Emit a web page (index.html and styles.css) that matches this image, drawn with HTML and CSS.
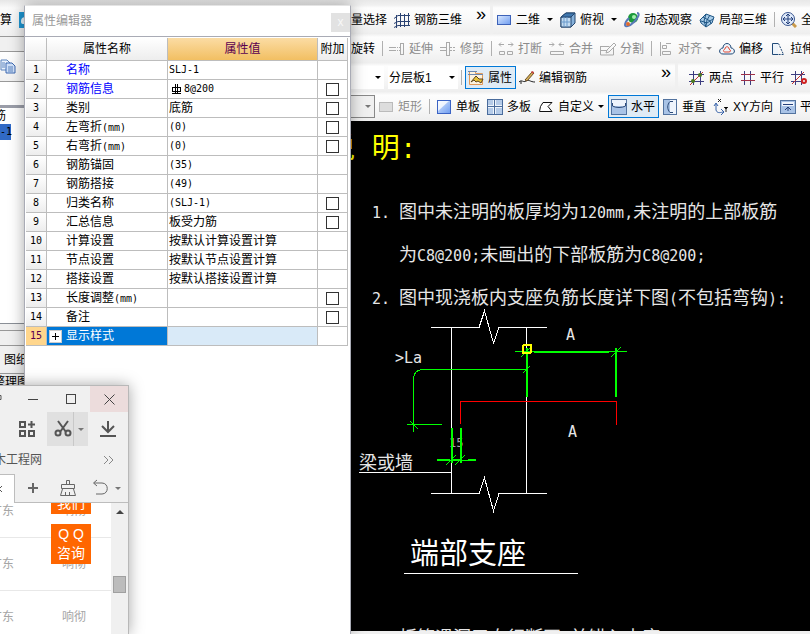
FILE: index.html
```
<!DOCTYPE html>
<html lang="zh-CN">
<head>
  <title>属性编辑器</title>
  <meta charset="UTF-8">
  <meta name="viewport" content="width=device-width, initial-scale=1">
  <link rel="stylesheet" href="styles.css">
</head>
<body>
  <div class="app">
    <!-- left dock, mostly under the floating windows -->
    <aside class="dock">
      <div class="dock-menu">
        <span>算</span>
        <svg width="16" height="16" viewBox="0 0 16 16"><rect width="16" height="16" fill="#1e96d2"/><path d="M2 9c0-3 3-5 5-3 4-1 6 4 3 6H4c-2 0-2-2-2-3z" fill="#e8f6fc"/></svg>
      </div>
      <div class="dock-strip"></div>
      <div class="dock-tools">
        <svg width="16" height="16" viewBox="0 0 16 16"><path d="M1 1h6l3 3v7H1z" fill="#eaf2fd" stroke="#5b83bd"/><path d="M6 4h6l3 3v7H6z" fill="#cfe0f8" stroke="#3c68b0"/><path d="M8 8h5M8 10h5M8 12h5M2 4h3M2 6h3M2 8h3" stroke="#5b83bd"/></svg>
      </div>
      <div class="dock-search"></div>
      <div class="dock-tree">
        <div class="tree-item tail">筋</div>
        <div class="tree-item selected">-1</div>
      </div>
      <div class="dock-strip split"></div>
      <div class="dock-strip"></div>
      <div class="dock-tab">图纸</div>
      <div class="dock-foot tail">整理图</div>
    </aside>

    <main class="workspace">
      <div class="toolbars">
        <div class="row">
          <div class="group view-tools">
            <button>批量选择</button>
            <button><svg width="16" height="16" viewBox="0 0 16 16"><path d="M2.500 3v13M6.500 1v14M10.500 2v13M14.500 1v13M0 6.500l4-3h12M0 11.500l4-2h12M0 15.500l4-2h12" fill="none" stroke="#2a4272"/></svg>钢筋三维</button>
            <button class="more">»</button>
          </div>
          <div class="group fill">
            <button class="split"><svg width="16" height="16" viewBox="0 0 16 16"><defs><linearGradient id="blue" x1="0" y1="0" x2="1" y2="1"><stop offset="0" stop-color="#dbe9ff"/><stop offset="1" stop-color="#6e9cf0"/></linearGradient></defs><rect x="1.500" y="3.500" width="13" height="9" fill="url(#blue)" stroke="#3d62b8"/></svg>二维<i class="caret"></i></button>
            <button class="split"><svg width="16" height="16" viewBox="0 0 16 16"><path d="M1 5l5-4h9v10l-4 4H1z" fill="#86b1da" stroke="#24466e"/><path d="M1 5h10v10H1z" fill="#c3dcf2" stroke="#24466e"/><path d="M1 5l5-4h9l-4 4z" fill="#3f76ad" stroke="#24466e"/><path d="M4 15V5M7 15V5M1 10h10" stroke="#6a9acb"/></svg>俯视<i class="caret"></i></button>
            <button><svg width="16" height="16" viewBox="0 0 16 16"><circle cx="9" cy="6" r="5" fill="#1d9a3c"/><circle cx="10" cy="5" r="2" fill="#a4efae"/><path d="M13 1c3 0 2 4-3 9S1 15 1 13s2-5 4-7" fill="none" stroke="#5a78b8" stroke-width="2"/><circle cx="4" cy="12" r="2" fill="#e06a2c"/></svg>动态观察</button>
            <button><svg width="16" height="16" viewBox="0 0 16 16"><path d="M1 8l6-6 8 3-2 6-6 4-5-4z" fill="#a8cce8" stroke="#1f5685"/><path d="M4 5l7 4 1 3M7 2l-2 7 2 6M11 3L8 8l-1 6M2 9l6 2 6-4" fill="none" stroke="#1f5685"/></svg>局部三维</button>
            <span class="sep"></span>
            <button><svg width="16" height="16" viewBox="0 0 16 16"><path d="M11 11l4 4" stroke="#c99a4a" stroke-width="3"/><circle cx="7" cy="7" r="6.500" fill="#dfeafa" stroke="#3a5690"/><path d="M7 2v10M2 7h10M5 4l2-2 2 2M5 10l2 2 2-2M4 5L2 7l2 2M10 5l2 2-2 2" fill="none" stroke="#24407c"/></svg>全屏</button>
          </div>
        </div>

        <div class="row">
          <div class="group fill edit-tools">
            <button>旋转</button>
            <span class="sep"></span>
            <button disabled><svg width="16" height="16" viewBox="0 0 16 16"><path d="M0 6.500h7M0 9.500h7M11.500 2v12M14.500 2v12M11 2.500h4M11 13.500h4M8 6.500h1M10 6.500h1M8 9.500h1M10 9.500h1" stroke="#aaa"/></svg>延伸</button>
            <button disabled><svg width="16" height="16" viewBox="0 0 16 16"><path d="M0 6.500h6M0 9.500h6M6.500 1v14M9.500 1v14M6 1.500h4M6 14.500h4M10 6.500h2M13 6.500h2M10 9.500h2M13 9.500h2" stroke="#aaa"/></svg>修剪</button>
            <span class="sep"></span>
            <button disabled><svg width="16" height="16" viewBox="0 0 16 16"><path d="M1 3.500h5M3 1.500l-2 2 2 2M10 3.500h5M13 1.500l2 2-2 2M1.500 10.500h5v3h-5zM9.500 10.500h5v3h-5z" fill="none" stroke="#aaa"/></svg>打断</button>
            <button disabled><svg width="16" height="16" viewBox="0 0 16 16"><path d="M0 3.500h5M3 1.500l2 2-2 2M10 3.500h5M12 1.500l-2 2 2 2M1.500 10.500h13v3h-13z" fill="none" stroke="#aaa"/></svg>合并</button>
            <button disabled><svg width="16" height="16" viewBox="0 0 16 16"><path d="M0.500 5.500h9M0.500 5v9h13V7M1 9.500h6M6 12l1-3 7-7 2 2-7 7z" fill="none" stroke="#aaa"/></svg>分割</button>
            <span class="sep"></span>
            <button disabled><svg width="16" height="16" viewBox="0 0 16 16"><path d="M2.500 1v14M4.500 4.500h4v3h-4zM4.500 10.500h8v3h-8zM8 2.500h5" fill="none" stroke="#aaa"/></svg>对齐<i class="caret"></i></button>
            <button><svg width="16" height="16" viewBox="0 0 16 16"><path d="M4 13c-5 0-4-6 0-6 0-6 8-6 8 0 4 0 5 6 0 6z" fill="#eef4fa" stroke="#214a78"/><path d="M6 11c-2 0-2-2 0-3 0-3 4-3 4 0 2 1 2 3 0 3z" fill="none" stroke="#e04530"/></svg>偏移</button>
            <button><svg width="16" height="16" viewBox="0 0 16 16"><path d="M8 2.500H2.500v11H8" fill="#eef4fa" stroke="#214a78"/><path d="M8.500 2.500l5 11H8" fill="none" stroke="#214a78" stroke-dasharray="2 1"/></svg>拉伸</button>
          </div>
        </div>

        <div class="row">
          <div class="group layer-tools">
            <label class="combo"><select aria-label="构件"><option></option></select></label>
            <label class="combo layer"><select aria-label="分层"><option>分层板1</option></select></label>
            <span class="sep"></span>
            <button class="pressed"><svg width="16" height="16" viewBox="0 0 16 16"><path d="M1.500 1.500h6v2h7v11h-13z" fill="#fdf3df" stroke="#e09a5a"/><path d="M0 1.500h9M0 4.500h15" stroke="#6c88b0"/><path d="M3 12l5-6 3 3 4 0-2 4-3-2-2 1-2-2z" fill="#e8c33a" stroke="#5a4520"/></svg>属性</button>
            <button><svg width="16" height="16" viewBox="0 0 16 16"><path d="M0 12c3-3 4 1 7-1s4 1 9 1M2 11v3" fill="none" stroke="#222"/><path d="M6 10l7-8 2 1-7 8z" fill="#d8b45a" stroke="#6a4b22"/><path d="M12 2l1-1 2 1-1 2z" fill="#c44"/></svg>编辑钢筋</button>
            <button class="more">»</button>
          </div>
          <div class="group fill">
            <span class="grip"></span>
            <button><svg width="16" height="16" viewBox="0 0 16 16"><path d="M4.500 1v14M11.500 1v14M0 4.500h15M0 11.500h15" stroke="#3d3d80"/><path d="M1 15L14 2" stroke="#c03030"/><circle cx="4" cy="11" r="2" fill="#4a7a20"/><circle cx="11" cy="5" r="2" fill="#4a7a20"/></svg>两点</button>
            <button><svg width="16" height="16" viewBox="0 0 16 16"><path d="M4.500 1v14M10.500 1v14" stroke="#3d3d80"/><path d="M1 4.500h14M1 10.500h14" stroke="#a03048"/></svg>平行</button>
            <button><svg width="16" height="16" viewBox="0 0 16 16"><path d="M4.500 1v14M10.500 1v14M0 4.500h14M0 11.500h10" stroke="#3d3d80"/><path d="M1 14L13 2" stroke="#c03030"/><circle cx="13" cy="11" r="2" fill="none" stroke="#d02020" stroke-width="2"/></svg>点角</button>
          </div>
        </div>

        <div class="row">
          <div class="group fill">
            <label class="combo boxed"><select aria-label="类型" disabled><option></option></select></label>
            <button disabled><svg width="16" height="16" viewBox="0 0 16 16"><rect x="1.500" y="3.500" width="13" height="9" fill="#ddd" stroke="#bbb"/></svg>矩形</button>
            <span class="sep"></span>
            <button><svg width="16" height="16" viewBox="0 0 16 16"><rect x="1.500" y="1.500" width="13" height="13" fill="url(#blue)" stroke="#3b63c4"/><path d="M2 2h11L2 12z" fill="#fff" opacity="0.8"/></svg>单板</button>
            <button><svg width="16" height="16" viewBox="0 0 16 16"><rect x="0.500" y="0.500" width="15" height="15" fill="#b5cbe8" stroke="#4a6c9c"/><path d="M7.500 1v14M1 7.500h14" stroke="#eef4fb" stroke-width="3"/><path d="M7.500 1v14M1 7.500h14" stroke="#4a6c9c"/></svg>多板</button>
            <button><svg width="16" height="16" viewBox="0 0 16 16"><path d="M5 3.500h9l-4 4 4 5H1.500l1-5z" fill="#fff" stroke="#111"/></svg>自定义<i class="caret"></i></button>
            <button class="pressed"><svg width="16" height="16" viewBox="0 0 16 16"><rect x="0.500" y="0.500" width="15" height="15" fill="#a9c3e6" stroke="#53739f"/><path d="M1 1h14v6H1z" fill="#eef4fc"/><path d="M1.500 4v3c3 2 10 2 13 0V4" fill="none" stroke="#2c4a78"/></svg>水平</button>
            <button><svg width="16" height="16" viewBox="0 0 16 16"><rect x="1.500" y="0.500" width="13" height="15" fill="#a9c3e6" stroke="#53739f"/><path d="M8 1h6v14H8z" fill="#eef4fc"/><path d="M11 2.500H8c-3 3-3 8 0 11h3" fill="none" stroke="#2c4a78"/></svg>垂直</button>
            <button><svg width="16" height="16" viewBox="0 0 16 16"><path d="M3 5v6c1 3 3 3 7 2M1 7l2-3 2 3M8 10l3 3-3 3" fill="none" stroke="#3460a8"/><path d="M5 0l3 3M8 0L5 3M11 8l2 2 2-2M13 10v3" stroke="#222"/></svg>XY方向</button>
            <button><svg width="16" height="16" viewBox="0 0 16 16"><rect x="0.500" y="1.500" width="15" height="13" fill="#a9c3e6" stroke="#53739f"/><path d="M2 3h12v4H2z" fill="#eef4fc"/><path d="M3 5.500h10M8 12V8M5 11l3-3 3 3" fill="none" stroke="#24407c"/></svg>平行边</button>
          </div>
        </div>
      </div>

      <section class="canvas">
        <h1>说 明:</h1>
        <div class="note"><span class="half">1.</span><p>图中未注明的板厚均为<span class="half">120mm,</span>未注明的上部板筋<br>为<span class="half">C8@200;</span>未画出的下部板筋为<span class="half">C8@200;</span></p></div>
        <div class="note"><span class="half">2.</span><p>图中现浇板内支座负筋长度详下图<span class="half">(</span>不包括弯钩<span class="half">):</span></p></div>
        <figure>
          <svg class="detail" width="330" height="220" viewBox="320 300 330 220">
            <!-- wall outline with break lines -->
            <g class="wall">
              <path d="M431 327.500H479L484.500 311L493.500 343L499 327.500H547"/>
              <path d="M431 493.500H479L484.500 478L493.500 511L499 493.500H547"/>
              <path d="M451.500 327V493M526.500 327V493M359 472.500H451"/>
            </g>
            <g class="rebar">
              <path d="M460.500 424V401.500H616.500V425"/>
            </g>
            <text class="faint" x="449" y="447">15</text>
            <g class="dims">
              <path d="M527 369.500H422Q413.500 370 413.500 380V432M407 424.500H442M410 421L418 429M523 373L530 366M515 351.500H627M521 357L531 347M611 357L621 347M446 465L456 455M455 465L465 455"/>
              <path class="thick" d="M527 348V397M616 348V397M534 352H609M452 428V463M461 428V463M437 460H450M452 460H461M468 460H476"/>
              <path d="M450 460.500H476"/>
            </g>
            <rect class="pick" x="523" y="345" width="8" height="8" rx="1"/>
            <text x="395" y="363">&gt;La</text>
            <text x="566" y="340">A</text>
            <text x="568" y="437">A</text>
            <text class="cjk" x="359" y="469">梁或墙</text>
          </svg>
          <figcaption>端部支座</figcaption>
        </figure>
        <div class="note"><span class="half">3.</span><p>板筋遇洞口自行断开<span class="half">,</span>并锚入支座</p></div>
      </section>
    </main>
  </div>

  <section class="window props">
    <header class="props-title">属性编辑器<button class="props-close" aria-label="关闭">x</button></header>
    <table>
      <colgroup><col class="c-num"><col class="c-name"><col class="c-value"><col class="c-add"></colgroup>
      <thead>
        <tr><th></th><th>属性名称</th><th class="active">属性值</th><th>附加</th></tr>
      </thead>
      <tbody>
        <tr><th>1</th><td class="name key">名称</td><td class="code">SLJ-1</td><td></td></tr>
        <tr><th>2</th><td class="name key">钢筋信息</td><td class="code"><svg class="grade" width="11" height="11" viewBox="0 0 11 11"><rect x="1.500" y="3.500" width="8" height="4" fill="none" stroke="#000"/><path d="M4.500 0v10M6.500 0v10M1 9.500h9" stroke="#000"/></svg>8@200</td><td class="add"><input type="checkbox" aria-label="附加 钢筋信息"></td></tr>
        <tr><th>3</th><td class="name">类别</td><td>底筋</td><td class="add"><input type="checkbox" aria-label="附加 类别"></td></tr>
        <tr><th>4</th><td class="name">左弯折<span class="code">(mm)</span></td><td class="code">(0)</td><td class="add"><input type="checkbox" aria-label="附加 左弯折"></td></tr>
        <tr><th>5</th><td class="name">右弯折<span class="code">(mm)</span></td><td class="code">(0)</td><td class="add"><input type="checkbox" aria-label="附加 右弯折"></td></tr>
        <tr><th>6</th><td class="name">钢筋锚固</td><td class="code">(35)</td><td></td></tr>
        <tr><th>7</th><td class="name">钢筋搭接</td><td class="code">(49)</td><td></td></tr>
        <tr><th>8</th><td class="name">归类名称</td><td class="code">(SLJ-1)</td><td class="add"><input type="checkbox" aria-label="附加 归类名称"></td></tr>
        <tr><th>9</th><td class="name">汇总信息</td><td>板受力筋</td><td class="add"><input type="checkbox" aria-label="附加 汇总信息"></td></tr>
        <tr><th>10</th><td class="name">计算设置</td><td>按默认计算设置计算</td><td></td></tr>
        <tr><th>11</th><td class="name">节点设置</td><td>按默认节点设置计算</td><td></td></tr>
        <tr><th>12</th><td class="name">搭接设置</td><td>按默认搭接设置计算</td><td></td></tr>
        <tr><th>13</th><td class="name">长度调整<span class="code">(mm)</span></td><td></td><td class="add"><input type="checkbox" aria-label="附加 长度调整"></td></tr>
        <tr><th>14</th><td class="name">备注</td><td></td><td class="add"><input type="checkbox" aria-label="附加 备注"></td></tr>
        <tr class="current"><th>15</th><td class="name"><div class="expand"><button aria-label="展开"><svg width="11" height="11" viewBox="0 0 11 11"><path d="M2 5.500h7M5.500 2v7" stroke="#000"/></svg></button>显示样式</div></td><td></td><td></td></tr>
      </tbody>
    </table>
  </section>

  <section class="window browser">
    <header class="caption-bar">
      <svg width="8" height="12" viewBox="0 0 8 12"><path d="M-2 2.500h3v4h-3" fill="none" stroke="#555"/></svg>
      <button aria-label="最小化"><svg width="11" height="11" viewBox="0 0 11 11"><path d="M0 5.500h10" stroke="#444"/></svg></button>
      <button aria-label="最大化"><svg width="11" height="11" viewBox="0 0 11 11"><rect x="0.500" y="0.500" width="9" height="9" fill="none" stroke="#444"/></svg></button>
      <button class="close" aria-label="关闭"><svg width="11" height="11" viewBox="0 0 11 11"><path d="M0.500 0.500l10 10M10.500 0.500l-10 10" stroke="#444"/></svg></button>
    </header>
    <div class="browser-tools">
      <button aria-label="扩展"><svg width="18" height="18" viewBox="0 0 18 18"><path d="M2 2h5v5H2zM2 11h5v5H2zM11 11h5v5h-5zM13.500 1v7M10 4.500h7" fill="none" stroke="#555" stroke-width="2"/></svg></button>
      <button class="cut" aria-label="截图"><svg width="18" height="18" viewBox="0 0 18 18"><path d="M4 1l8 11M14 1L6 12" stroke="#555" stroke-width="2"/><circle cx="4" cy="13" r="2.500" fill="none" stroke="#555" stroke-width="2"/><circle cx="14" cy="13" r="2.500" fill="none" stroke="#555" stroke-width="2"/></svg></button>
      <button class="cut-menu" aria-label="截图菜单"><i class="caret"></i></button>
      <button class="download" aria-label="下载"><svg width="18" height="18" viewBox="0 0 18 18"><path d="M9 1v11M3 6l6 6 6-6M1 16h16" fill="none" stroke="#555" stroke-width="2"/></svg></button>
    </div>
    <div class="bookmarks">
      <a class="tail" href="#">木工程网</a>
      <button aria-label="更多书签"><svg width="11" height="11" viewBox="0 0 11 11"><path d="M1 1l4 4-4 4M6 1l4 4-4 4" fill="none" stroke="#888"/></svg></button>
    </div>
    <div class="tabs">
      <button class="tab" aria-label="关闭标签"><svg width="8" height="8" viewBox="0 0 8 8"><path d="M-4 1l6 6M2 1l-6 6" stroke="#555"/></svg></button>
      <button aria-label="新标签"><svg width="18" height="18" viewBox="0 0 18 18"><path d="M9 4v10M4 9h10" stroke="#666" stroke-width="2"/></svg></button>
      <button aria-label="清理"><svg width="18" height="18" viewBox="0 0 18 18"><path d="M7.500 5.500v-4h3v4M2.500 9.500v-4h13v4zM3.500 10l-2 6.500h15l-2-6.500M6.500 16v-3M10.500 16v-3" fill="none" stroke="#666"/></svg></button>
      <button class="undo" aria-label="恢复"><svg width="18" height="18" viewBox="0 0 18 18"><path d="M5 1L1.500 4 5 7M2 4h8c7 0 7 11 0 11H4" fill="none" stroke="#666"/></svg><i class="caret"></i></button>
    </div>
    <div class="page">
      <div class="page-list">
        <div class="page-row"><span>广东</span><span>响彻</span></div>
        <div class="page-row"><span>广东</span><span>响彻</span></div>
        <div class="page-row"><span>广东</span><span>响彻</span></div>
      </div>
      <div class="scrollbar"><span class="up"></span><span class="thumb"></span></div>
      <a class="contact top" href="#">联系<br>我们</a>
      <a class="contact qq" href="#">Q Q<br>咨询</a>
    </div>
  </section>
</body>
</html>
```
FILE: styles.css
```
:root {
  --face: #f0f0f0;
  --line: #bdbdbd;
  --accent: #0078d7;
  --orange: #ff6600;
}

* {
  box-sizing: border-box;
}

body {
  margin: 0;
  height: 100vh;
  overflow: hidden;
  position: relative;
  background: var(--face);
  color: #000;
  font: 12px/16px "Liberation Sans", "Noto Sans CJK SC", sans-serif;
}

button {
  display: flex;
  align-items: center;
  justify-content: center;
  padding: 0;
  border: none;
  background: none;
  color: inherit;
  font: inherit;
  white-space: nowrap;
}

svg {
  flex: none;
  display: block;
}

.caret {
  width: 0;
  border: 3px solid transparent;
  border-top-color: currentColor;
  border-bottom: none;
}

.app {
  display: flex;
  height: 100%;
  padding-bottom: 3px;
}

/* left dock */
.dock {
  flex: 0 0 320px;
  display: flex;
  flex-direction: column;
  overflow: hidden;
}

.dock-menu {
  display: flex;
  align-items: center;
  gap: 7px;
  height: 37px;
  padding-top: 4px;
  border-bottom: 1px solid #999;
  background: linear-gradient(#e6e6e6, #fafafa 8px, var(--face));
}

.dock-strip {
  flex: none;
  height: 15px;
  border-bottom: 1px solid #999;
}

.dock-strip.split {
  height: 8px;
  border-top: 1px solid #8a8f96;
}

.dock-tools {
  display: flex;
  align-items: center;
  height: 30px;
  border-bottom: 1px solid #999;
  background: linear-gradient(#fff, var(--face));
}

.dock-search {
  height: 26px;
  background: #fff;
  border-bottom: 3px solid #9a9da8;
}

.dock-tree {
  height: 215px;
  background: #fff;
}

.tree-item {
  width: 11px;
  white-space: nowrap;
}

.tail {
  direction: rtl;
}

.tree-item.tail {
  width: 6px;
}

.tree-item.selected {
  background: #316ac5;
  font-family: "DejaVu Sans Mono", monospace;
  font-size: 10px;
}

.dock-tab {
  margin-top: 2px;
  padding: 4px;
  height: 26px;
  border-bottom: 1px solid #999;
}

.dock-foot {
  width: 29px;
  height: 100px;
  white-space: nowrap;
}

/* toolbars */
.workspace {
  flex: 1;
  min-width: 0;
  display: flex;
  flex-direction: column;
}

.toolbars {
  padding-top: 5px;
  background: linear-gradient(#e8e8e8, var(--face) 5px);
}

.row {
  display: flex;
  gap: 3px;
  height: 29px;
}

.group {
  flex: none;
  display: flex;
  align-items: center;
  overflow: hidden;
  background: linear-gradient(var(--face), #fdfdfd 3px, #fafafa 12px, #eeeeee);
}

.group.fill {
  flex: 1;
}

.view-tools {
  width: 170px;
  padding-left: 16px;
}

.edit-tools {
  padding-left: 28px;
}

.layer-tools {
  width: 355px;
}

.group button {
  flex: none;
  gap: 4px;
  height: 23px;
  padding: 0 3px 0 2px;
  border: 1px solid transparent;
}

.group button:disabled {
  color: #8c8c8c;
}

.group button.pressed {
  border-color: var(--accent);
  background: #dfebf5;
}

.group .split .caret {
  margin-left: 3px;
}

.group .more {
  margin-left: auto;
  height: 27px;
  align-items: flex-start;
  font-size: 18px;
  line-height: 14px;
}

.sep {
  flex: none;
  width: 1px;
  height: 15px;
  margin: 0 3px;
  background: #b0b0b0;
}

.grip {
  width: 2px;
  height: 14px;
  margin: 0 4px;
  background: repeating-linear-gradient(#bbb 0 2px, transparent 2px 4px);
}

.combo {
  flex: none;
  display: flex;
  align-items: center;
  width: 64px;
  height: 23px;
  padding-right: 3px;
  background: #fff;
}

.combo.layer {
  width: 70px;
  margin-left: 4px;
}

.combo.boxed {
  width: 55px;
  border: 1px solid #888;
  border-left: none;
  background: var(--face);
  color: #777;
}

.combo select {
  flex: 1;
  min-width: 0;
  padding: 0 1px;
  border: none;
  background: none;
  appearance: none;
  color: #000;
  font: inherit;
}

.combo::after {
  content: "";
  border: 3px solid transparent;
  border-top-color: currentColor;
  border-bottom: none;
}

/* drawing area */
.canvas {
  flex: 1;
  min-height: 0;
  overflow: hidden;
  background: #000;
  color: #e6e6e6;
  font: 18px/43px "Noto Sans CJK SC", sans-serif;
}

.canvas h1 {
  height: 60px;
  margin: 0 0 8px;
  padding-left: 7px;
  color: #ff0;
  font: 28px/60px "Liberation Mono", "Noto Sans CJK SC", monospace;
}

.note {
  display: grid;
  grid-template-columns: 27px 1fr;
  align-items: baseline;
  padding-left: 52px;
  white-space: nowrap;
}

.note p {
  margin: 0;
}

.half {
  font-family: "DejaVu Sans Mono", monospace;
  font-size: 15px;
  line-height: 16px;
}

figure {
  margin: -18px 0 41px;
}

.detail {
  fill: none;
  stroke-width: 1;
}

.detail path,
.detail rect {
  shape-rendering: crispEdges;
}

.detail text {
  fill: #e6e6e6;
  font: 15px "DejaVu Sans Mono", monospace;
}

.detail .cjk {
  font: 18px "Noto Sans CJK SC", sans-serif;
}

.detail .faint {
  fill: #b0a0b0;
  font-size: 12px;
}

.wall {
  stroke: #fff;
}

.rebar {
  stroke: #f00;
}

.dims {
  stroke: #0f0;
}

.thick {
  stroke-width: 2;
}

.pick {
  stroke: #ff0;
  stroke-width: 2;
}

figcaption {
  width: 174px;
  margin: 10px 0 0 84px;
  padding-left: 6px;
  border-bottom: 1px solid #fff;
  color: #fff;
  font-size: 29px;
}

/* floating windows */
.window {
  position: absolute;
  overflow: hidden;
  box-shadow: 0 0 14px rgba(0, 0, 0, 0.35);
}

.props {
  top: 5px;
  bottom: 0;
  left: 24px;
  width: 327px;
  background: #fff;
  border: 1px solid #a9abb5;
  border-top-color: #e4e4e4;
  border-bottom: none;
}

.props-title {
  display: flex;
  align-items: center;
  justify-content: space-between;
  height: 31px;
  padding-left: 7px;
  border-bottom: 1px solid #a9abb5;
  color: #9a9a9a;
}

.props-close {
  width: 19px;
  height: 19px;
  margin-top: 2px;
  background: #e2e2e2;
  color: #f8f8f8;
}

table {
  width: 322px;
  margin: 1px 0 0 1px;
  border-collapse: separate;
  border-spacing: 0;
  table-layout: fixed;
}

.c-num { width: 21px; }
.c-name { width: 121px; }
.c-value { width: 150px; }
.c-add { width: 30px; }

th, td {
  height: 19px;
  padding: 0 1px;
  border-right: 1px solid var(--line);
  border-bottom: 1px solid var(--line);
  font-weight: normal;
  text-align: left;
  white-space: nowrap;
}

th {
  background: linear-gradient(#fff, #ededed);
  text-align: center;
}

tbody th,
.code {
  font-family: "DejaVu Sans Mono", monospace;
  font-size: 10px;
}

thead th {
  height: 23px;
}

thead .active {
  background: linear-gradient(#fbdca4, #f2bf62);
  color: #5a0050;
}

.name {
  padding-left: 19px;
}

.key {
  color: #00f;
}

.grade {
  display: inline-block;
  margin: 0 2px;
  vertical-align: middle;
}

.add {
  text-align: center;
}

.add input {
  display: block;
  width: 13px;
  height: 13px;
  margin: 0 auto;
  border: 1px solid #333;
  background: #fff;
  appearance: none;
}

.current th {
  background: #ffd68c;
  color: #5a0050;
}

.current td {
  background: #d9eaf8;
}

.current td:last-child {
  background: #fff;
}

.current .name {
  padding-left: 2px;
  background: var(--accent);
  color: #fff;
}

.expand {
  display: flex;
  align-items: center;
  gap: 4px;
}

.expand button {
  width: 13px;
  height: 13px;
  border: 1px solid #ccc;
  background: #fff;
}

.browser {
  top: 385px;
  bottom: 0;
  left: 0;
  width: 129px;
  display: flex;
  flex-direction: column;
  background: var(--face);
  border: 1px solid #b8b8b8;
  border-width: 1px 1px 0 0;
}

.caption-bar {
  display: grid;
  grid-template-columns: 14px 38px 38px 38px;
  align-items: center;
  height: 26px;
}

.caption-bar button {
  height: 100%;
}

.caption-bar .close {
  background: #ecdcdc;
}

.browser-tools {
  display: flex;
  height: 34px;
  padding-left: 7px;
}

.browser-tools button {
  width: 40px;
}

.browser-tools .cut {
  width: 27px;
  padding-left: 6px;
  background: #e0e0e0;
}

.browser-tools .cut-menu {
  width: 15px;
  border-left: 1px solid #c8c8c8;
  background: #e0e0e0;
  color: #777;
}

.bookmarks {
  display: flex;
  align-items: center;
  justify-content: space-between;
  height: 28px;
  padding-right: 14px;
}

.bookmarks a {
  width: 42px;
  color: #555;
  text-decoration: none;
  white-space: nowrap;
}

.tabs {
  display: grid;
  grid-template-columns: 15px 36px 34px 1fr;
  height: 29px;
  border-bottom: 1px solid var(--line);
}

.tabs .tab {
  justify-content: flex-start;
  margin-bottom: -1px;
  border: 1px solid var(--line);
  border-width: 1px 1px 0 0;
  background: #fff;
}

.tabs .undo {
  gap: 5px;
  color: #777;
}

.page {
  flex: 1;
  min-height: 0;
  position: relative;
  display: flex;
  overflow: hidden;
  background: #fff;
}

.page-list {
  flex: 1;
  margin-top: -18px;
}

.page-row {
  display: grid;
  grid-template-columns: 14px 1fr;
  gap: 48px;
  align-items: center;
  height: 53px;
  border-bottom: 1px solid #e8e8e8;
  color: #a5a5a5;
  white-space: nowrap;
}

/* the page is scrolled sideways, only the end of the first column shows */
.page-row span:first-child {
  direction: rtl;
}

.scrollbar {
  width: 17px;
  padding: 7px 2px;
  background: var(--face);
}

.up {
  display: block;
  width: 8px;
  margin: 0 auto;
  border: 4px solid transparent;
  border-top: none;
  border-bottom-color: #444;
}

.thumb {
  display: block;
  height: 17px;
  margin-top: 62px;
  border: 1px solid #a0a0a0;
  background: #bcbcbc;
}

.contact {
  position: absolute;
  left: 51px;
  width: 40px;
  padding: 1px 0;
  background: var(--orange);
  color: #fff;
  font-size: 14px;
  line-height: 19px;
  text-align: center;
  text-decoration: none;
}

.contact.top {
  top: -29px;
}

.contact.qq {
  top: 21px;
}
```
